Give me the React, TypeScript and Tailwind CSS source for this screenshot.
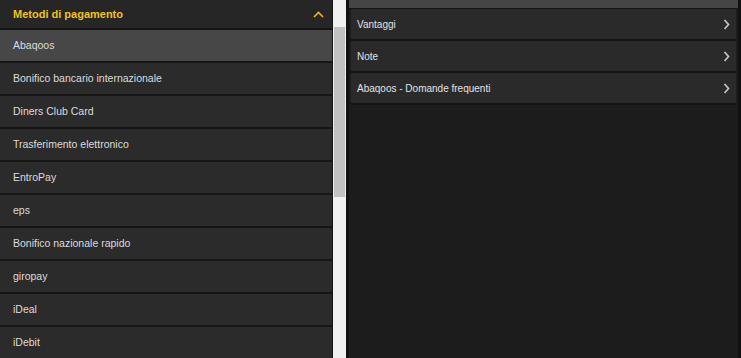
import React from 'react';

const methods = [
  'Abaqoos',
  'Bonifico bancario internazionale',
  'Diners Club Card',
  'Trasferimento elettronico',
  'EntroPay',
  'eps',
  'Bonifico nazionale rapido',
  'giropay',
  'iDeal',
  'iDebit',
];

const details = ['Vantaggi', 'Note', 'Abaqoos - Domande frequenti'];

const ChevronUp = () => (
  <svg width="11" height="7" viewBox="0 0 11 7" fill="none">
    <path d="M1 6 L5.5 1.5 L10 6" stroke="#e8b90c" strokeWidth="1.6" />
  </svg>
);

const ChevronRight = () => (
  <svg width="7" height="11" viewBox="0 0 7 11" fill="none">
    <path d="M1.5 1 L5.5 5.5 L1.5 10" stroke="#c4c4c4" strokeWidth="1.7" />
  </svg>
);

export default function App() {
  return (
    <div
      className="flex h-[358px] w-[741px] overflow-hidden bg-[#1c1c1c] text-[11px]"
      style={{ fontFamily: '"Liberation Sans", Arial, sans-serif' }}
    >
      {/* colonna sinistra: metodi */}
      <div className="flex w-[333px] flex-col border-r border-[#141414] bg-[#2a2a2a]">
        <div className="flex h-[30px] shrink-0 items-center justify-between border-b-2 border-[#151515] bg-[#262626] pl-[13px] pr-[8px]">
          <span className="font-bold text-[#f2c21a]">Metodi di pagamento</span>
          <ChevronUp />
        </div>
        {methods.map((m, i) => (
          <div
            key={m}
            className={`flex h-[33px] shrink-0 items-center border-b-2 border-[#161616] pl-[13px] text-[10.5px] text-[#dcdcdc] ${
              i === 0 ? 'bg-[#474747]' : 'bg-[#2b2b2b]'
            }`}
          >
            {m}
          </div>
        ))}
      </div>

      {/* barra di scorrimento */}
      <div className="flex w-[13px] shrink-0 flex-col bg-[#f0f0f0] px-[1px] pt-[27px]">
        <div className="h-[170px] w-full bg-[#c1c1c1]" />
      </div>

      {/* colonna destra: dettagli */}
      <div className="flex flex-1 flex-col border-l-[3px] border-r-[3px] border-[#111111] bg-[#1c1c1c]">
        <div className="h-[9px] shrink-0 border-b border-[#151515] bg-[#454545]" />
        {details.map((d) => (
          <div
            key={d}
            className="mx-[2px] flex h-[32px] shrink-0 items-center justify-between border-b-2 border-[#141414] bg-[#2a2a2a] pl-[6px] pr-[6px] text-[10px] text-[#e2e2e2]"
          >
            <span>{d}</span>
            <ChevronRight />
          </div>
        ))}
      </div>
    </div>
  );
}
